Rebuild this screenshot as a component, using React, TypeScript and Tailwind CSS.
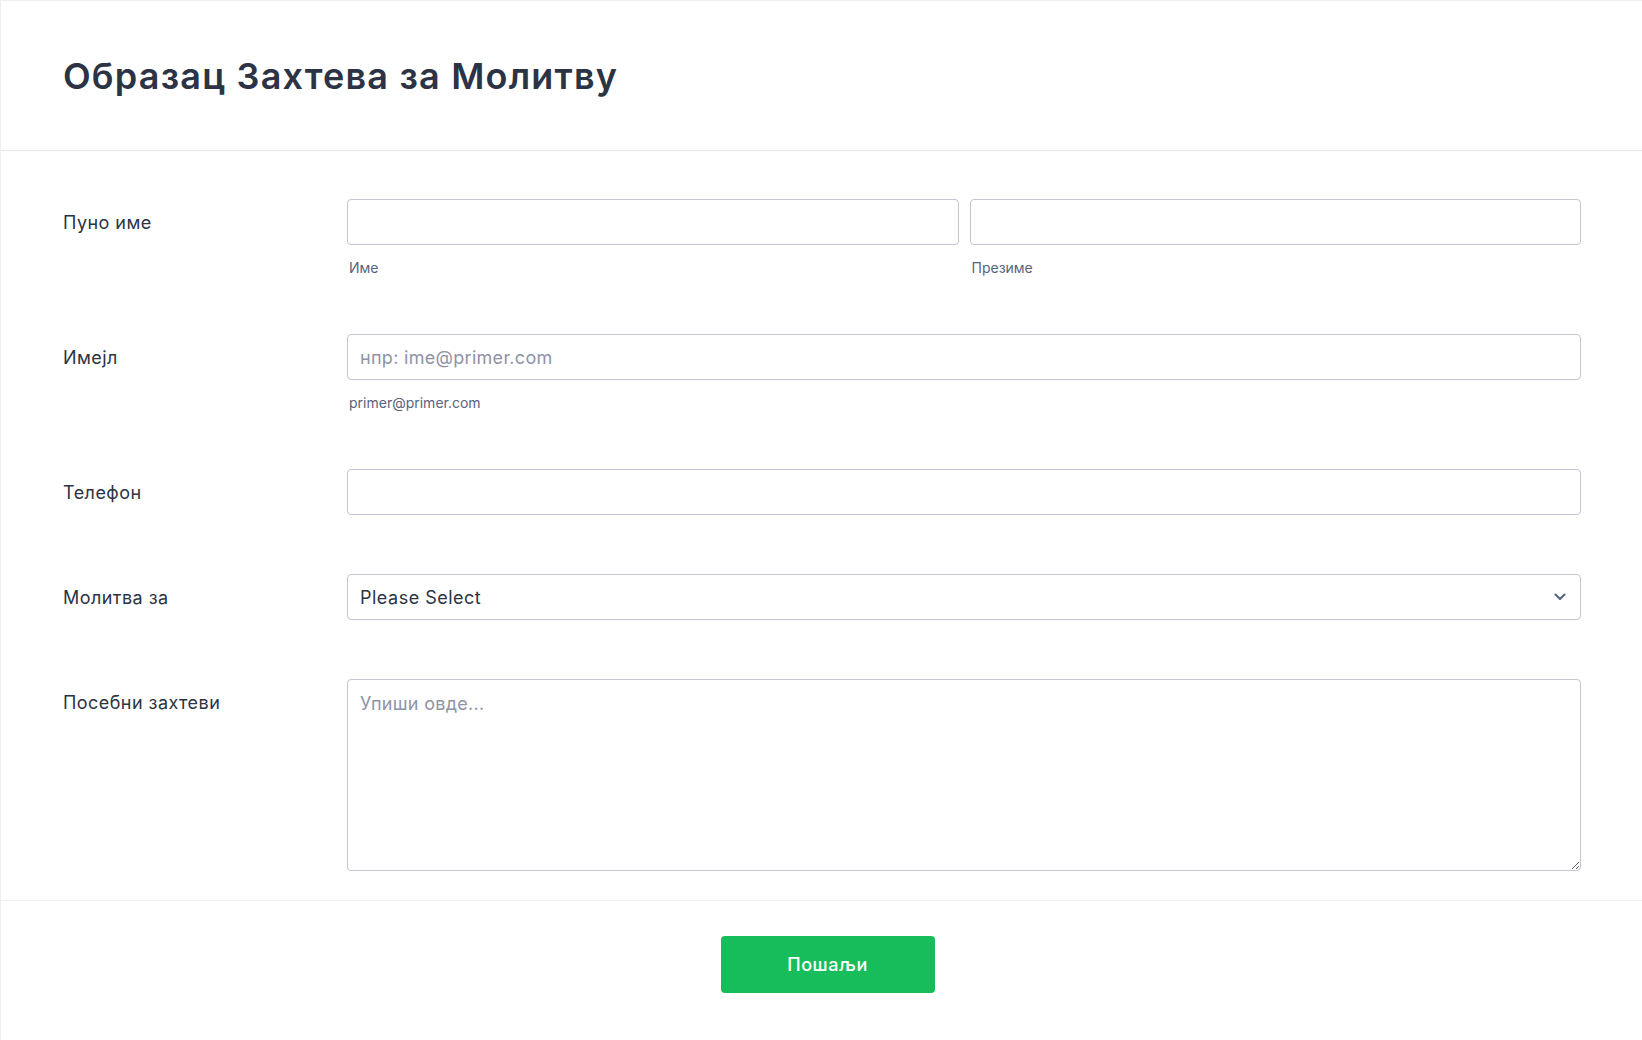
import React from 'react';

const font = "font-['Inter','Noto_Sans',sans-serif]";

function Row({ label, children }: { label: string; children: React.ReactNode }) {
  return (
    <div className="flex">
      <div className="w-[284px] shrink-0 h-[46px] flex items-center text-[18px] tracking-[0.45px] text-[#2c3345]">{label}</div>
      <div className="flex-1">{children}</div>
    </div>
  );
}

const inputCls =
  'w-full h-[46px] rounded-[4px] border border-[#c3c6d4] bg-white px-3 text-[18px] tracking-[0.3px] text-[#2c3345] placeholder:text-[#8f93a6] outline-none';

function SubLabel({ children }: { children: React.ReactNode }) {
  return <div className="mt-[16px] pl-[2px] text-[14px] leading-[14px] text-[#57647e]">{children}</div>;
}

export default function App() {
  return (
    <div className={`${font} w-[1642px] h-[1040px] bg-white border-l border-t border-[#eeeeee] overflow-hidden`}>
      {/* Header */}
      <div className="h-[150px] flex items-center px-[62px] border-b border-[#e3e5ef]">
        <h1 className="text-[36px] leading-[40px] font-semibold text-[#2c3345] tracking-[1.2px]">Образац Захтева за Молитву</h1>
      </div>

      {/* Fields */}
      <div className="pl-[62px] pr-[61px] pt-[48px] pb-[29px] flex flex-col gap-[59px] border-b border-[#eff0f6]">
        <Row label="Пуно име">
          <div className="flex gap-[11px]">
            <div className="flex-1">
              <input className={inputCls} />
              <SubLabel>Име</SubLabel>
            </div>
            <div className="flex-1">
              <input className={inputCls} />
              <SubLabel>Презиме</SubLabel>
            </div>
          </div>
        </Row>
        <Row label="Имејл">
          <input className={inputCls} placeholder="нпр: ime@primer.com" />
          <SubLabel>primer@primer.com</SubLabel>
        </Row>
        <Row label="Телефон">
          <input className={inputCls} />
        </Row>
        <Row label="Молитва за">
          <div className="relative">
            <select className={`${inputCls} appearance-none tracking-[0.5px]`} defaultValue="">
              <option value="">Please Select</option>
            </select>
            <svg
              className="absolute right-[15px] top-1/2 -translate-y-1/2 pointer-events-none"
              width="12"
              height="8"
              viewBox="0 0 12 8"
              fill="none"
            >
              <path d="M1.5 1.5L6 6L10.5 1.5" stroke="#57647e" strokeWidth="2" strokeLinecap="round" strokeLinejoin="round" />
            </svg>
          </div>
        </Row>
        <Row label="Посебни захтеви">
          <textarea
            className="block w-full h-[192px] rounded-[4px] border border-[#c3c6d4] bg-white px-3 py-[10px] text-[18px] tracking-[0.3px] text-[#2c3345] placeholder:text-[#8f93a6] outline-none"
            placeholder="Упиши овде..."
          />
        </Row>
      </div>

      {/* Footer */}
      <div className="flex justify-center pt-[35px] pl-[12px]">
        <button className="w-[214px] h-[57px] rounded-[4px] bg-[#18bd5b] text-white text-[18px] font-medium tracking-[0.6px]">Пошаљи</button>
      </div>
    </div>
  );
}
